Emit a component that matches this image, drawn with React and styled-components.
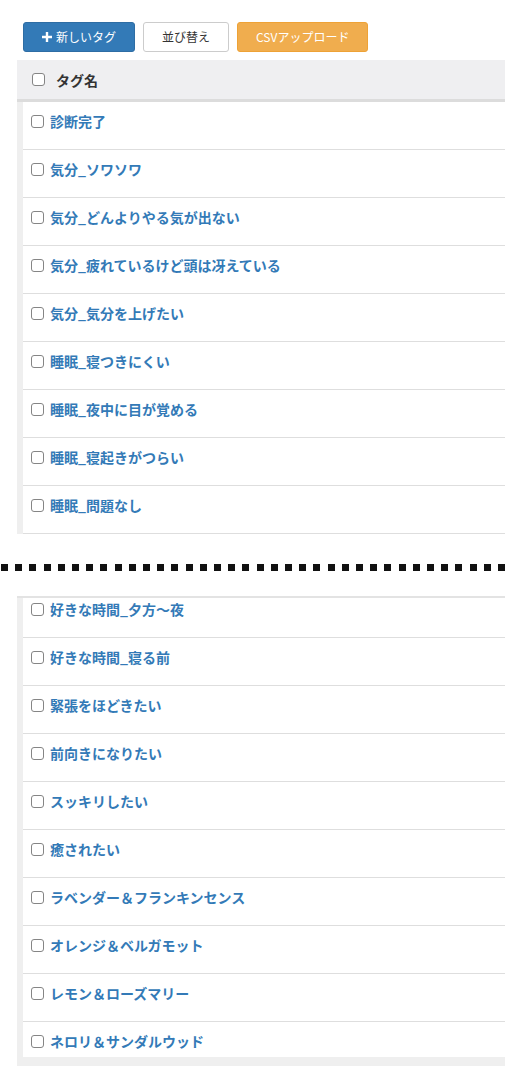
import React from 'react'
import styled, { createGlobalStyle } from 'styled-components'

const GlobalStyle = createGlobalStyle`
  body {
    margin: 0;
    background: #fff;
    font-family: "Noto Sans CJK JP", "Noto Sans", sans-serif;
    color: #333;
  }
`

const upperTags = [
  '診断完了',
  '気分_ソワソワ',
  '気分_どんよりやる気が出ない',
  '気分_疲れているけど頭は冴えている',
  '気分_気分を上げたい',
  '睡眠_寝つきにくい',
  '睡眠_夜中に目が覚める',
  '睡眠_寝起きがつらい',
  '睡眠_問題なし',
]

const lowerTags = [
  '好きな時間_夕方〜夜',
  '好きな時間_寝る前',
  '緊張をほどきたい',
  '前向きになりたい',
  'スッキリしたい',
  '癒されたい',
  'ラベンダー＆フランキンセンス',
  'オレンジ＆ベルガモット',
  'レモン＆ローズマリー',
  'ネロリ＆サンダルウッド',
]

export default function App() {
  return (
    <>
      <GlobalStyle />
      <Page>
        <Toolbar>
          <Btn variant="primary">
            <PlusIcon viewBox="0 0 10 10">
              <path d="M3.8 0h2.4v3.8H10v2.4H6.2V10H3.8V6.2H0V3.8h3.8z" fill="currentColor" />
            </PlusIcon>
            新しいタグ
          </Btn>
          <Btn>並び替え</Btn>
          <Btn variant="warning">CSVアップロード</Btn>
        </Toolbar>

        <Panel>
          <HeadRow>
            <Check />
            <HeadLabel>タグ名</HeadLabel>
          </HeadRow>
          <Rows>
            {upperTags.map((t) => (
              <Row key={t}>
                <Check />
                <TagLink>{t}</TagLink>
              </Row>
            ))}
          </Rows>
        </Panel>

        <Separator />

        <Panel continued>
          <Rows bottomGap>
            {lowerTags.map((t, i) => (
              <Row
                key={t}
                cutTop={i === 0}
                cutBottom={i === lowerTags.length - 1}
              >
                <Check />
                <TagLink>{t}</TagLink>
              </Row>
            ))}
          </Rows>
        </Panel>
      </Page>
    </>
  )
}

const Page = styled.div`
  padding: 22px 0 0 17px;
  overflow: hidden;
`

const Toolbar = styled.div`
  display: flex;
  gap: 8px;
  margin-left: 6px;
  margin-bottom: 8px;
`

const btnColors = {
  primary: { bg: '#337ab7', border: '#2e6da4', fg: '#fff' },
  warning: { bg: '#f0ad4e', border: '#eea236', fg: '#fff' },
  default: { bg: '#fff', border: '#ccc', fg: '#333' },
}

const Btn = styled.button`
  display: inline-flex;
  align-items: center;
  justify-content: center;
  gap: 4px;
  height: 30px;
  padding: 0 18px;
  border-radius: 3px;
  font-family: inherit;
  font-size: 12px;
  line-height: 1;
  border: 1px solid ${(p) => btnColors[p.variant || 'default'].border};
  background: ${(p) => btnColors[p.variant || 'default'].bg};
  color: ${(p) => btnColors[p.variant || 'default'].fg};
`

const PlusIcon = styled.svg`
  width: 10px;
  height: 10px;
`

const Panel = styled.div`
  background: #efefef;
  border-top: ${(p) => (p.continued ? '2px solid #e3e3e3' : 'none')};
`

const HeadRow = styled.div`
  display: flex;
  align-items: center;
  height: 39px;
  padding-left: 15px;
  background: #efeff1;
  border-bottom: 3px solid #dcdcdc;
`

const HeadLabel = styled.span`
  margin-left: 11px;
  font-size: 14px;
  font-weight: 700;
  color: #333;
`

const Rows = styled.div`
  padding-left: 6px;
  padding-bottom: ${(p) => (p.bottomGap ? '9px' : '0')};
`

const Row = styled.div`
  display: flex;
  align-items: center;
  background: #fff;
  padding: ${(p) => (p.cutTop ? '1px' : '9px')} 0
    ${(p) => (p.cutBottom ? '6px' : '18px')} 8px;
  line-height: 20px;
  border-bottom: ${(p) => (p.cutBottom ? 'none' : '1px solid #dedede')};
`

const Check = styled.span`
  box-sizing: border-box;
  width: 13px;
  height: 13px;
  border: 1px solid #858585;
  border-radius: 3px;
  background: #fff;
  flex-shrink: 0;
`

const TagLink = styled.a`
  margin-left: 6px;
  font-size: 14px;
  font-weight: 700;
  color: #337ab7;
  text-decoration: none;
  white-space: nowrap;
`

const Separator = styled.div`
  margin: 30px 0 25px -17px;
  height: 7px;
  background-image: repeating-linear-gradient(
    to right,
    #111 0,
    #111 7px,
    transparent 7px,
    transparent 14.2px
  );
  background-position: 1px 0;
`
